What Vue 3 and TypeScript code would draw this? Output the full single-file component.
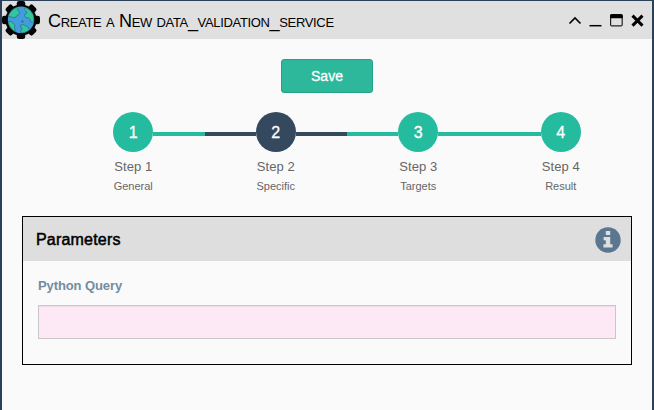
<script setup lang="ts">
import { ref } from 'vue'

interface Step {
  id: number
  label: string
  caption: string
}

const steps: Step[] = [
  { id: 1, label: 'Step 1', caption: 'General' },
  { id: 2, label: 'Step 2', caption: 'Specific' },
  { id: 3, label: 'Step 3', caption: 'Targets' },
  { id: 4, label: 'Step 4', caption: 'Result' },
]
const current = ref<number>(2)
const query = ref<string>('')
</script>

<template>
  <div class="window">
    <header class="titlebar">
      <svg class="logo" width="40" height="39" viewBox="0 0 40 39">
        <g fill="#050505">
          <g v-for="angle in [0, 45, 90, 135]" :key="angle" :transform="`rotate(${angle} 20 19)`">
            <rect x="15.8" y="0" width="8.4" height="38" rx="2.2" />
          </g>
          <circle cx="20" cy="19" r="15.6" />
        </g>
        <circle cx="20" cy="18.8" r="13.2" fill="#429bdc" />
        <g fill="#35c49d" stroke="#1f6575" stroke-width="0.6" stroke-linejoin="round">
          <path d="M8.5 12.5 Q11.5 7.5 16 6.4 Q17.5 7.5 16.5 9 L18 10.8 Q19.5 12 17.8 13.5 Q15.5 14 15 16 Q13 17.5 11 16 Q9 16.5 7.5 14.8Z" />
          <path d="M24 6.3 Q30 8.5 32 13.5 Q33.2 17 32.6 20.5 Q31 22.5 29.5 20.5 Q30 18 27.5 17 Q24 17.5 23.5 14.5 Q24 12.5 26 12 Q25 9.5 23.5 8.5Z" />
          <path d="M7.2 20.5 Q11 20 12.5 22.5 Q14.5 23.5 13.5 26 L14.5 30.6 Q8 27.5 7.2 20.5Z" />
          <path d="M19.5 24.2 Q23 22.8 25 25 Q28.5 26 28.3 28.8 Q25 31.8 20.5 32 Q18.5 30 21 28.5 Q21.8 27 19.8 26.5Z" />
        </g>
        <circle cx="21.5" cy="20.5" r="0.9" fill="#1f6575" />
      </svg>
      <h1 class="title">Create a New data_validation_service</h1>
      <svg class="controls" width="78" height="16" viewBox="0 0 78 16">
        <path d="M1.5 11.5 L7 6 L12.5 11.5" fill="none" stroke="#000" stroke-width="1.6" />
        <path d="M21.5 13.7 H33.5" stroke="#000" stroke-width="1.5" />
        <rect x="42.6" y="2.7" width="11.6" height="11.2" rx="1.2" fill="none" stroke="#222" stroke-width="1.2" />
        <path d="M42 6.3 V3.8 Q42 2.2 43.6 2.2 H53.2 Q54.8 2.2 54.8 3.8 V6.3Z" fill="#000" />
        <path d="M64.5 3.6 L74.5 13.6 M74.5 3.6 L64.5 13.6" stroke="#000" stroke-width="3" />
      </svg>
    </header>

    <main class="content">
      <button class="save" type="button">Save</button>

      <ol class="steps">
        <li
          v-for="step in steps"
          :key="step.id"
          class="step"
          :class="{ active: step.id === current }"
          @click="current = step.id"
        >
          <div class="track">
            <span class="line" :class="{ hidden: step.id === 1 }"></span>
            <span class="dot">{{ step.id }}</span>
            <span class="line" :class="{ hidden: step.id === steps.length }"></span>
          </div>
          <span class="label">{{ step.label }}</span>
          <span class="caption">{{ step.caption }}</span>
        </li>
      </ol>

      <section class="panel">
        <div class="panel-head">
          <h2>Parameters</h2>
          <svg class="info" width="26" height="26" viewBox="0 0 26 26">
            <circle cx="13" cy="13" r="12.7" fill="#5a7690" />
            <path
              fill="#dedede"
              d="M10.8 4 H15.2 V8.1 H10.8Z M8.6 9.9 H15.2 V17.3 H17.6 V20.6 H8.4 V17.3 H10.8 V13.2 H8.6Z"
            />
          </svg>
        </div>
        <div class="panel-body">
          <label for="query">Python Query</label>
          <input id="query" v-model="query" type="text" />
        </div>
      </section>
    </main>
  </div>
</template>

<style>
body {
  background: #fafafa;
}
</style>

<style scoped>
.window {
  box-sizing: border-box;
  width: 654px;
  height: 410px;
  border: solid #2a4159;
  border-width: 1px 2px 0;
  background: #fafafa;
  font-family: "Liberation Sans", Arial, sans-serif;
  overflow: hidden;
}
.titlebar {
  display: flex;
  align-items: center;
  height: 38px;
  background: #e0e0e0;
}
.logo {
  flex: none;
  margin-left: -1px;
}
.title {
  margin: 1px 0 0 7px;
  font-size: 18px;
  line-height: 22px;
  font-weight: 400;
  font-variant: small-caps;
  letter-spacing: -0.34px;
  white-space: nowrap;
  color: #000;
}
.controls {
  margin: 0 6px 0 auto;
}
.content {
  padding: 20px 20px 0;
}
.save {
  display: block;
  box-sizing: border-box;
  width: 92px;
  height: 34px;
  margin: 0 auto;
  padding: 0;
  border: 1px solid #21a287;
  border-radius: 3px;
  background: #2db89b;
  color: #fff;
  font: 14px "Liberation Sans", Arial, sans-serif;
  -webkit-text-stroke: 0.3px #fff;
}
.steps {
  display: flex;
  margin: 19px 0 0;
  padding: 0 0 0 40px;
  list-style: none;
}
.step {
  flex: 1;
  display: flex;
  flex-direction: column;
  align-items: center;
  color: #666;
}
.track {
  display: flex;
  align-items: center;
  align-self: stretch;
}
.line {
  flex: 1;
  height: 4px;
  margin-top: 4px;
  background: #25bb9f;
}
.dot {
  width: 40px;
  height: 40px;
  border-radius: 50%;
  background: #25bb9f;
  color: #fff;
  font-size: 16px;
  line-height: 41px;
  text-align: center;
  -webkit-text-stroke: 0.3px #fff;
}
.active .line,
.active .dot {
  background: #34495e;
}
.line.hidden {
  visibility: hidden;
}
.label {
  margin-top: 6px;
  font-size: 13px;
  line-height: 18px;
  letter-spacing: 0.1px;
}
.caption {
  margin-top: 3px;
  font-size: 11px;
  line-height: 14px;
}
.panel {
  box-sizing: border-box;
  height: 149px;
  margin-top: 23px;
  border: 1px solid #000;
}
.panel-head {
  display: flex;
  align-items: center;
  justify-content: space-between;
  height: 44px;
  padding: 0 10px 0 13px;
  background: #dedede;
}
h2 {
  margin: 2px 0 0;
  font-size: 16px;
  font-weight: 400;
  letter-spacing: 0.2px;
  color: #000;
  -webkit-text-stroke: 0.5px #000;
}
.info {
  margin-top: 2px;
}
.panel-body {
  padding: 16px 15px 0;
}
label {
  display: block;
  font-size: 13px;
  line-height: 18px;
  font-weight: 700;
  letter-spacing: -0.1px;
  color: #738ca2;
}
input {
  display: block;
  box-sizing: border-box;
  width: 100%;
  height: 34px;
  margin-top: 10px;
  padding: 6px 12px;
  border: 1px solid #c8c8c8;
  border-radius: 0;
  outline: 0;
  background: #fde8f5;
  box-shadow: inset 0 1px 1px rgba(0, 0, 0, 0.06);
}
</style>
